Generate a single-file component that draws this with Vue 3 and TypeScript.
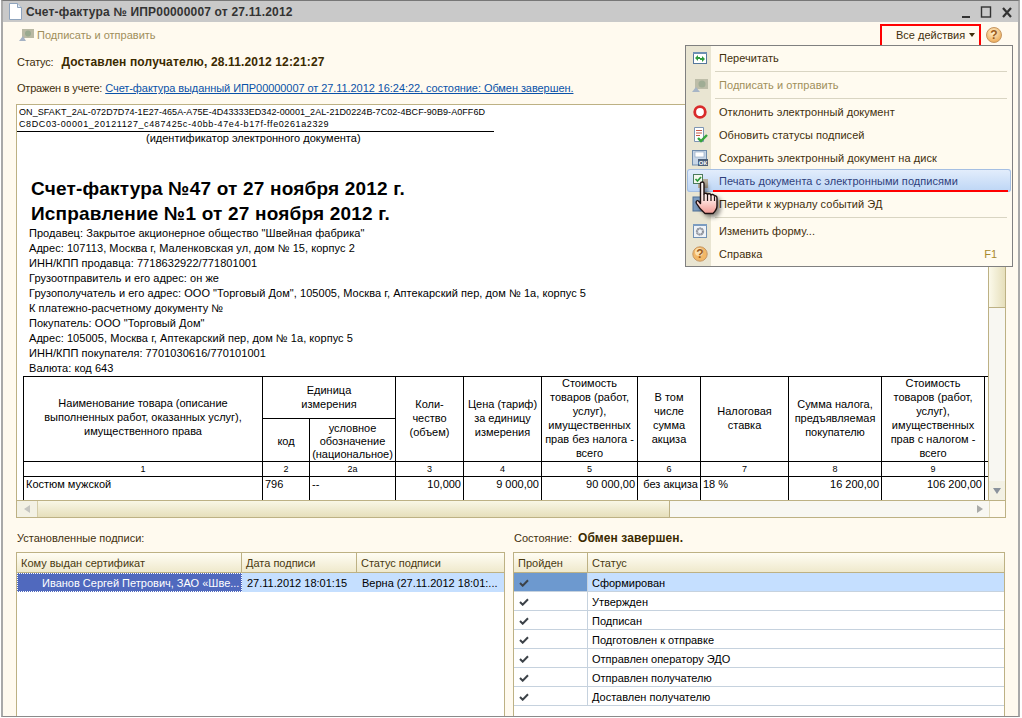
<script setup lang="ts">
interface MenuItem { label?: string; icon?: string; disabled?: boolean; active?: boolean; key?: string; sep?: boolean }
const menu: MenuItem[] = [
  { label: 'Перечитать', icon: 'reload' },
  { sep: true },
  { label: 'Подписать и отправить', icon: 'sign', disabled: true },
  { sep: true },
  { label: 'Отклонить электронный документ', icon: 'stop' },
  { label: 'Обновить статусы подписей', icon: 'check' },
  { label: 'Сохранить электронный документ на диск', icon: 'save' },
  { label: 'Печать документа с электронными подписями', icon: 'print', active: true },
  { label: 'Перейти к журналу событий ЭД', icon: 'journal' },
  { sep: true },
  { label: 'Изменить форму...', icon: 'gear' },
  { label: 'Справка', icon: 'help', key: 'F1' },
]
const docLines = [
  'Продавец: Закрытое акционерное общество "Швейная фабрика"',
  'Адрес: 107113, Москва г, Маленковская ул, дом № 15, корпус 2',
  'ИНН/КПП продавца: 7718632922/771801001',
  'Грузоотправитель и его адрес: он же',
  'Грузополучатель и его адрес: ООО "Торговый Дом", 105005, Москва г, Аптекарский пер, дом № 1а, корпус 5',
  'К платежно-расчетному документу №',
  'Покупатель: ООО "Торговый Дом"',
  'Адрес: 105005, Москва г, Аптекарский пер, дом № 1а, корпус 5',
  'ИНН/КПП покупателя: 7701030616/770101001',
  'Валюта: код 643',
]
const colWidths = [239, 47, 86, 68, 78, 96, 63, 88, 93, 103, 40]
const numbers = ['3', '4', '5', '6', '7', '8', '9']
const statuses = ['Сформирован', 'Утвержден', 'Подписан', 'Подготовлен к отправке', 'Отправлен оператору ЭДО', 'Отправлен получателю', 'Доставлен получателю']
</script>

<template>
  <div class="page">
    <div class="window">
      <header class="titlebar">
        <svg class="docicon" width="14" height="17" viewBox="0 0 14 17">
          <path d="M1.5.5h8l4 4v12h-12z" fill="#fff" stroke="#8fa4bd" />
          <path d="M9.5.5v4h4" fill="#dfe8f2" stroke="#8fa4bd" />
        </svg>
        <span class="title">Счет-фактура № ИПР00000007 от 27.11.2012</span>
        <div class="winbtns">
          <svg width="52" height="14" viewBox="0 0 52 14">
            <rect x="0" y="10" width="8" height="2" fill="#333" />
            <rect x="19.500" y="1" width="9" height="10" fill="none" stroke="#333" stroke-width="1.4" />
            <path d="M41 2l8 9M49 2l-8 9" stroke="#333" stroke-width="2.2" />
          </svg>
        </div>
      </header>

      <main class="content">
        <div class="toolbar">
          <button class="tool disabled">
            <svg width="15" height="14" viewBox="0 0 15 14">
              <rect x="3" y="1" width="12" height="9" fill="#b9b9a4" />
              <circle cx="9" cy="5.500" r="3" fill="#99a98f" />
              <path d="M0 13l4-5 3 5z" fill="#a5b2c4" />
            </svg>
            Подписать и отправить
          </button>
          <div class="allactions">Все действия<i class="caret"></i></div>
          <svg class="helpbig" width="18" height="18" viewBox="0 0 18 18">
            <defs>
              <radialGradient id="hb" cx="45%" cy="35%" r="70%">
                <stop offset="0" stop-color="#fff1cf" />
                <stop offset="1" stop-color="#eba44c" />
              </radialGradient>
            </defs>
            <circle cx="9" cy="9" r="7.500" fill="url(#hb)" stroke="#c69763" />
            <text x="9" y="13" text-anchor="middle" class="qmark">?</text>
          </svg>
        </div>

        <div class="status">
          <span>Статус:</span>
          <b>Доставлен получателю, 28.11.2012 12:21:27</b>
        </div>
        <div class="reflect">
          <span>Отражен в учете:</span>
          <a>Счет-фактура выданный ИПР00000007 от 27.11.2012 16:24:22, состояние: Обмен завершен.</a>
        </div>

        <section class="doc">
          <div class="docmain">
            <div class="sheet">
              <div class="docid">
                <span class="idone">ON_SFAKT_2AL-072D7D74-1E27-465A-A75E-4D43333ED342-00001_2AL-21D0224B-7C02-4BCF-90B9-A0FF6D</span><br />
                <span class="idtwo">C8DC03-00001_20121127_c487425c-40bb-47e4-b17f-ffe0261a2329</span>
              </div>
              <div class="docidcap">(идентификатор электронного документа)</div>
              <h1>Счет-фактура №47 от 27 ноября 2012 г.<br />Исправление №1 от 27 ноября 2012 г.</h1>
              <div class="lines">
                <p v-for="line in docLines" :key="line" class="line">{{ line }}</p>
              </div>
              <table class="invoice">
                <colgroup>
                  <col v-for="(w, i) in colWidths" :key="i" :style="{ width: w + 'px' }" />
                </colgroup>
                <tbody>
                  <tr class="h1">
                    <td rowspan="2" class="toptext">Наименование товара (описание<br />выполненных работ, оказанных услуг),<br />имущественного права</td>
                    <td colspan="2">Единица<br />измерения</td>
                    <td rowspan="2">Коли-<br />чество<br />(объем)</td>
                    <td rowspan="2">Цена (тариф)<br />за единицу<br />измерения</td>
                    <td rowspan="2" class="six"><div>Стоимость<br />товаров (работ,<br />услуг),<br />имущественных<br />прав без налога -<br />всего</div></td>
                    <td rowspan="2">В том<br />числе<br />сумма<br />акциза</td>
                    <td rowspan="2">Налоговая<br />ставка</td>
                    <td rowspan="2">Сумма налога,<br />предъявляемая<br />покупателю</td>
                    <td rowspan="2" class="six"><div>Стоимость<br />товаров (работ,<br />услуг),<br />имущественных<br />прав с налогом -<br />всего</div></td>
                    <td rowspan="2"></td>
                  </tr>
                  <tr class="h2">
                    <td>код</td>
                    <td class="three">условное<br />обозначение<br />(национальное)</td>
                  </tr>
                  <tr class="nums">
                    <td>1</td><td>2</td><td>2а</td>
                    <td v-for="n in numbers" :key="n">{{ n }}</td>
                    <td></td>
                  </tr>
                  <tr class="data">
                    <td class="l">Костюм мужской</td>
                    <td class="l">796</td>
                    <td class="l">--</td>
                    <td class="r">10,000</td>
                    <td class="r">9 000,00</td>
                    <td class="r">90 000,00</td>
                    <td class="r">без акциза</td>
                    <td class="l">18 %</td>
                    <td class="r">16 200,00</td>
                    <td class="r">106 200,00</td>
                    <td></td>
                  </tr>
                </tbody>
              </table>
            </div>
            <div class="vbar">
              <div class="vthumb"></div>
              <div class="vtrack"></div>
              <div class="vdown"><i class="tri down"></i></div>
            </div>
          </div>
          <div class="hbar">
            <div class="hleft"><i class="tri left"></i></div>
            <div class="hthumb"></div>
            <div class="htrack"></div>
            <div class="hright"><i class="tri right"></i></div>
            <div class="hcorner"></div>
          </div>
        </section>

        <section class="panels">
          <div class="panel">
            <div class="cap">Установленные подписи:</div>
            <div class="grid">
              <div class="ghead sig">
                <span>Кому выдан сертификат</span><span>Дата подписи</span><span>Статус подписи</span>
              </div>
              <div class="sigrow sig">
                <span class="sel">Иванов Сергей Петрович, ЗАО «Шве...</span>
                <span>27.11.2012 18:01:15</span>
                <span>Верна (27.11.2012 18:01:...</span>
              </div>
            </div>
          </div>
          <div class="panel">
            <div class="cap">Состояние: <b>Обмен завершен.</b></div>
            <div class="grid">
              <div class="ghead st">
                <span>Пройден</span><span>Статус</span>
              </div>
              <div v-for="(s, i) in statuses" :key="s" class="strow st" :class="{ cur: i === 0 }">
                <span class="tick">
                  <svg width="10" height="8" viewBox="0 0 10 8"><path d="M1 4l2.700 2.700L9 1.200" fill="none" stroke="#3c4248" stroke-width="2" /></svg>
                </span>
                <span>{{ s }}</span>
              </div>
            </div>
          </div>
        </section>
      </main>
    </div>

    <div class="menu">
      <template v-for="(m, i) in menu" :key="i">
        <div v-if="m.sep" class="sep"></div>
        <div v-else class="item" :class="{ disabled: m.disabled, active: m.active }">
          <span class="ico">
            <svg width="16" height="16" viewBox="0 0 16 16">
              <template v-if="m.icon === 'reload'">
                <rect x="1.500" y="2.500" width="13" height="11" fill="#fff" stroke="#55789c" />
                <rect x="1" y="2" width="14" height="2" fill="#6d8fb3" />
                <path d="M3 8l3-3v2h2v2H6v2zM13 9l-3 3v-2H8V8h2V6z" fill="#2f9b3f" />
              </template>
              <template v-else-if="m.icon === 'sign'">
                <rect x="3" y="2" width="13" height="10" fill="#bdbda8" />
                <circle cx="10" cy="7" r="3.500" fill="#a0ad95" />
                <path d="M0 15l4-5 4 5z" fill="#a7b5c6" />
              </template>
              <template v-else-if="m.icon === 'stop'">
                <circle cx="8" cy="8" r="5.300" fill="#fff" stroke="#d92b2b" stroke-width="2.800" />
                <path d="M5.500 6h5v4.500l-1.500 1.500h-2l-1.500-2z" fill="#fff" />
              </template>
              <template v-else-if="m.icon === 'check'">
                <path d="M2.500.5h9v14h-9z" fill="#fff" stroke="#7d95b3" />
                <path d="M4 3.500h6M4 6h6M4 8.500h4" stroke="#c55a4a" stroke-width="1" />
                <path d="M6 11l3 3 6-6" fill="none" stroke="#35a53c" stroke-width="2.400" />
              </template>
              <template v-else-if="m.icon === 'save'">
                <rect x="0.500" y="0.500" width="14" height="14.500" fill="#c7d6e7" stroke="#6f8cab" />
                <rect x="3" y="2" width="9" height="5" fill="#fff" stroke="#88a0bb" stroke-width=".6" />
                <rect x="6" y="9" width="10" height="7" fill="#4b5f78" />
                <text x="11" y="15" text-anchor="middle" class="ok">ОК</text>
              </template>
              <template v-else-if="m.icon === 'print'">
                <rect x="6" y="6" width="10" height="9" fill="#b6ab99" />
                <rect x="1.500" y="1.500" width="9" height="9" fill="#f4f8ee" stroke="#4c7a5d" />
                <path d="M3.500 6l2 2 3.500-4" fill="none" stroke="#2b9a3c" stroke-width="1.700" />
              </template>
              <template v-else-if="m.icon === 'journal'">
                <rect x="1" y="1" width="14" height="14" fill="#7c9cc0" stroke="#4f7197" />
              </template>
              <template v-else-if="m.icon === 'gear'">
                <rect x="1.500" y="1.500" width="13" height="13" fill="#eef2f7" stroke="#6f8fb3" />
                <rect x="1" y="1" width="14" height="2" fill="#7b9cc0" />
                <circle cx="8" cy="8.500" r="3" fill="none" stroke="#8b8f98" stroke-width="2.200" stroke-dasharray="1.500 .7" />
                <circle cx="8" cy="8.500" r="3.400" fill="none" stroke="#9a9ea7" stroke-width="1" />
              </template>
              <template v-else-if="m.icon === 'help'">
                <circle cx="8" cy="8" r="7.200" fill="#f2b868" stroke="#c69763" />
                <circle cx="7" cy="6" r="4" fill="#fbdfae" />
                <text x="8" y="12" text-anchor="middle" class="qmark">?</text>
              </template>
            </svg>
          </span>
          <span class="lbl">{{ m.label }}</span>
          <span v-if="m.key" class="key">{{ m.key }}</span>
          <i v-if="m.active" class="underline"></i>
        </div>
      </template>
    </div>

    <svg class="hand" width="28" height="38" viewBox="0 0 28 38">
      <defs>
        <linearGradient id="skin" x1="0" y1="0" x2="0" y2="1">
          <stop offset="0" stop-color="#fff" />
          <stop offset=".55" stop-color="#ffe6e2" />
          <stop offset="1" stop-color="#f29a93" />
        </linearGradient>
      </defs>
      <path d="M5.500 2.500c0-2 3.500-2 3.500 0V13c.5-1 3-1 3.500.5 .5-1 3-1 3.500.5 .5-.8 3-.8 3.500 1 .8-.5 2.500 0 2.500 2v8c0 3-2.500 6-4 7.500H10C7 30 3.500 26 1.500 22.500c-1-2 .5-3.500 2-2.500l2 2.500z" fill="url(#skin)" stroke="#1e1010" stroke-width="1.400" stroke-linejoin="round" />
      <path d="M9 13v7M12.500 13.500V20M16 14v6M19.500 15.500V20" stroke="#1e1010" stroke-width="1.200" />
    </svg>
  </div>
</template>

<style>
html, body { margin: 0; background: #fff; }
</style>

<style scoped>
.page {
  position: relative;
  width: 1022px;
  height: 718px;
  overflow: hidden;
  background: #fff;
  font: 11px "Liberation Sans", Arial, sans-serif;
  color: #3f2f0c;
}
.window {
  margin-left: 1px;
  width: 1019px;
  height: 717px;
  box-sizing: border-box;
  border: 2px solid #a9a9a9;
  border-top: 1px solid #777;
  border-bottom: 1px solid #8a8a8a;
  display: flex;
  flex-direction: column;
  background: #fffaef;
}
.titlebar {
  height: 21px;
  flex: none;
  background: #c9c9c9;
  display: flex;
  align-items: center;
  padding-left: 5px;
}
.docicon { margin-right: 4px; flex: none; }
.title {
  font: bold 12px "Liberation Sans", sans-serif;
  color: #333;
  letter-spacing: .18px;
  white-space: nowrap;
  padding-top: 1px;
}
.winbtns { margin-left: auto; margin-right: 4px; display: flex; padding-top: 2px; }
.content {
  flex: 1;
  min-height: 0;
  padding: 0 12px 0 13px;
  display: flex;
  flex-direction: column;
  overflow: hidden;
}
.toolbar {
  height: 26px;
  flex: none;
  display: flex;
  align-items: center;
  padding-left: 3px;
}
.tool {
  display: flex;
  align-items: center;
  gap: 3px;
  border: 0;
  padding: 0;
  background: none;
  font: inherit;
  color: #a08f5b;
}
.allactions {
  margin-left: auto;
  width: 101px;
  height: 23px;
  box-sizing: border-box;
  border: 2px solid #f00;
  display: flex;
  align-items: center;
  padding-left: 14px;
  color: #3f2f0c;
}
.caret {
  margin-left: 4px;
  border: 3px solid transparent;
  border-top: 4px solid #3f2f0c;
  border-bottom: 0;
}
.helpbig { margin: 0 3px 0 4px; }
.qmark { font: bold 12px "Liberation Sans", sans-serif; fill: #9a5a1c; }
.ok { font: bold 6px "Liberation Sans", sans-serif; fill: #fff; }
.status {
  height: 20px;
  margin-top: 4px;
  flex: none;
  display: flex;
  align-items: center;
  gap: 8px;
  padding-left: 1px;
}
.status span { letter-spacing: -.2px; }
.status b {
  font: bold 12px "Liberation Sans", sans-serif;
  color: #3b2a00;
  letter-spacing: .15px;
}
.reflect {
  margin-top: 6px;
  height: 20px;
  flex: none;
  display: flex;
  align-items: center;
  gap: 3px;
  padding-left: 1px;
}
.reflect span { letter-spacing: -.2px; }
.reflect a { color: #0a52a8; text-decoration: underline; letter-spacing: -.07px; }
.doc {
  margin-top: 6px;
  height: 414px;
  flex: none;
  box-sizing: border-box;
  border: 1px solid #bdb184;
  background: #fff;
  display: flex;
  flex-direction: column;
}
.docmain { flex: 1; min-height: 0; display: flex; }
.sheet {
  flex: 1;
  min-width: 0;
  overflow: hidden;
  color: #000;
}
.docid {
  padding: 1px 0 1px 2px;
  width: 475px;
  font: 9px/12px "Liberation Sans", sans-serif;
  white-space: nowrap;
  border-bottom: 1px solid #000;
  height: 24px;
}
.idone { letter-spacing: .07px; }
.idtwo { letter-spacing: .6px; }
.docidcap { padding-left: 129px; line-height: 13px; }
h1 {
  margin: 31px 0 0 14px;
  font: bold 19px/25px "Liberation Sans", sans-serif;
  letter-spacing: .2px;
  white-space: nowrap;
  height: 50px;
}
.lines { margin: 0 0 0 12px; letter-spacing: .05px; }
.line { margin: 0; line-height: 15px; white-space: nowrap; height: 15px; }
.invoice {
  margin: 0 0 0 6px;
  border-collapse: collapse;
  table-layout: fixed;
  width: 1001px;
  line-height: 14px;
}
.invoice td {
  border: 1px solid #000;
  text-align: center;
  padding: 0;
  overflow: hidden;
  white-space: nowrap;
  vertical-align: middle;
}
.invoice .h1 td { padding-bottom: 2px; }
.invoice .h1 td.toptext { padding-bottom: 4px; }
.invoice .h1 td.six { padding-bottom: 0; vertical-align: top; }
.six > div { margin-top: -1px; }
.invoice .h2 td { padding-top: 2px; }
.invoice .h2 td.three { line-height: 13px; vertical-align: bottom; }
.h1 { height: 42px; }
.h2 { height: 43px; }
.nums { height: 15px; font-size: 9px; }
.nums td { line-height: 13px; }
.data { height: 26px; }
.invoice .data td { vertical-align: top; padding: 0 2px; }
.invoice td.l { text-align: left; }
.invoice td.r { text-align: right; }
.vbar {
  width: 16px;
  flex: none;
  display: flex;
  flex-direction: column;
  border-left: 1px solid #bdb184;
  background: #f8f7f2;
}
.vthumb {
  height: 203px;
  flex: none;
  box-sizing: border-box;
  background: linear-gradient(90deg, #fbf9ea, #e6dfbb);
  border-bottom: 1px solid #bdb184;
}
.vtrack { flex: 1; }
.vdown { height: 19px; flex: none; display: flex; align-items: center; justify-content: center; background: #f3f1e4; }
.hbar {
  height: 17px;
  flex: none;
  display: flex;
  align-items: center;
  border-top: 1px solid #bdb184;
  background: #f8f7f2;
  box-sizing: border-box;
}
.hleft { width: 21px; height: 100%; display: flex; align-items: center; justify-content: center; background: #f3f1e4; border-right: 1px solid #d5cda8; box-sizing: border-box; }
.hthumb { width: 632px; height: 100%; background: linear-gradient(180deg, #f9f7e6, #e6dfbb); border-right: 1px solid #bdb184; box-sizing: border-box; }
.htrack { flex: 1; }
.hright { width: 18px; display: flex; justify-content: center; }
.hcorner { width: 16px; height: 100%; background: #fffaef; border-left: 1px solid #e2dcc0; box-sizing: border-box; }
.tri { display: block; width: 0; height: 0; border: 4px solid transparent; }
.tri.down { border-top: 6px solid #8a929c; border-bottom: 0; }
.tri.left { border-right: 6px solid #c5c5c0; border-left: 0; }
.tri.right { border-left: 6px solid #a9aaa8; border-right: 0; }
.panels {
  flex: 1;
  min-height: 0;
  display: grid;
  grid-template-columns: 489px 492px;
  column-gap: 8px;
}
.panel { display: flex; flex-direction: column; min-height: 0; }
.cap { height: 20px; margin-top: 10px; margin-bottom: 4px; flex: none; display: flex; align-items: center; gap: 6px; padding-left: 1px; }
.cap b { font: bold 12px "Liberation Sans", sans-serif; color: #3b2a00; letter-spacing: .1px; }
.grid {
  flex: 1;
  min-height: 0;
  border: 1px solid #bdb184;
  border-bottom: 0;
  background: #fff;
  overflow: hidden;
  margin-bottom: -4px;
}
.ghead {
  height: 20px;
  display: grid;
  background: linear-gradient(180deg, #fffdf4, #efe9cc);
  border-bottom: 1px solid #bdb184;
  color: #4a3a10;
  box-sizing: border-box;
}
.ghead > span {
  display: flex;
  align-items: center;
  padding-left: 4px;
  border-right: 1px solid #bdb184;
}
.ghead > span:last-child { border-right: 0; }
.sig { grid-template-columns: 225px 115px 1fr; }
.st { grid-template-columns: 74px 1fr; }
.sigrow {
  display: grid;
  height: 19px;
  background: #c5dfff;
  color: #000;
}
.sigrow > span {
  display: flex;
  align-items: center;
  padding-left: 5px;
  white-space: nowrap;
  overflow: hidden;
}
.sigrow .sel {
  background: #5069be;
  color: #fff;
  padding-left: 25px;
  outline: 1px dotted #fff;
  outline-offset: -1px;
}
.strow {
  display: grid;
  height: 19px;
  box-sizing: border-box;
  border-bottom: 1px solid #c6d2de;
  color: #000;
}
.strow > span {
  display: flex;
  align-items: center;
  padding-left: 4px;
  padding-top: 1px;
}
.strow > span:first-child {
  border-right: 1px solid #c6d2de;
  padding-left: 5px;
  padding-top: 1px;
}
.strow.cur { background: #c5dfff; }
.strow.cur .tick { background: #6d99cf; }
.menu {
  position: absolute;
  left: 685px;
  top: 45px;
  width: 328px;
  height: 222px;
  box-sizing: border-box;
  border: 1px solid #808080;
  background: linear-gradient(90deg, #e9e5d2 0, #e9e5d2 25px, #fffbf0 25px);
  z-index: 5;
}
.item {
  height: 23px;
  display: flex;
  align-items: center;
  position: relative;
  color: #3f2f0c;
  margin: 0 1px;
}
.item.disabled { color: #a08f5b; }
.item.active {
  color: #2e3f7c;
  background: linear-gradient(180deg, #e4eefc, #bcd5f5);
  border-radius: 3px;
  box-shadow: inset 0 0 0 1px #a5bfe3;
}
.ico { width: 24px; margin-right: 8px; display: flex; justify-content: center; padding-left: 2px; box-sizing: border-box; }
.lbl { white-space: nowrap; letter-spacing: .05px; }
.key { margin-left: auto; margin-right: 14px; color: #a88a2c; }
.underline {
  position: absolute;
  left: 26px;
  right: 3px;
  bottom: 0;
  height: 2px;
  background: #f00;
}
.sep {
  height: 4px;
  box-sizing: border-box;
  margin-left: 29px;
  margin-right: 5px;
  border-bottom: 1px solid #d9d5c3;
  transform: translateY(-1px);
}
.hand {
  position: absolute;
  left: 695px;
  top: 181px;
  z-index: 6;
  filter: drop-shadow(3px 3px 2px rgba(0,0,0,.45));
}
</style>
